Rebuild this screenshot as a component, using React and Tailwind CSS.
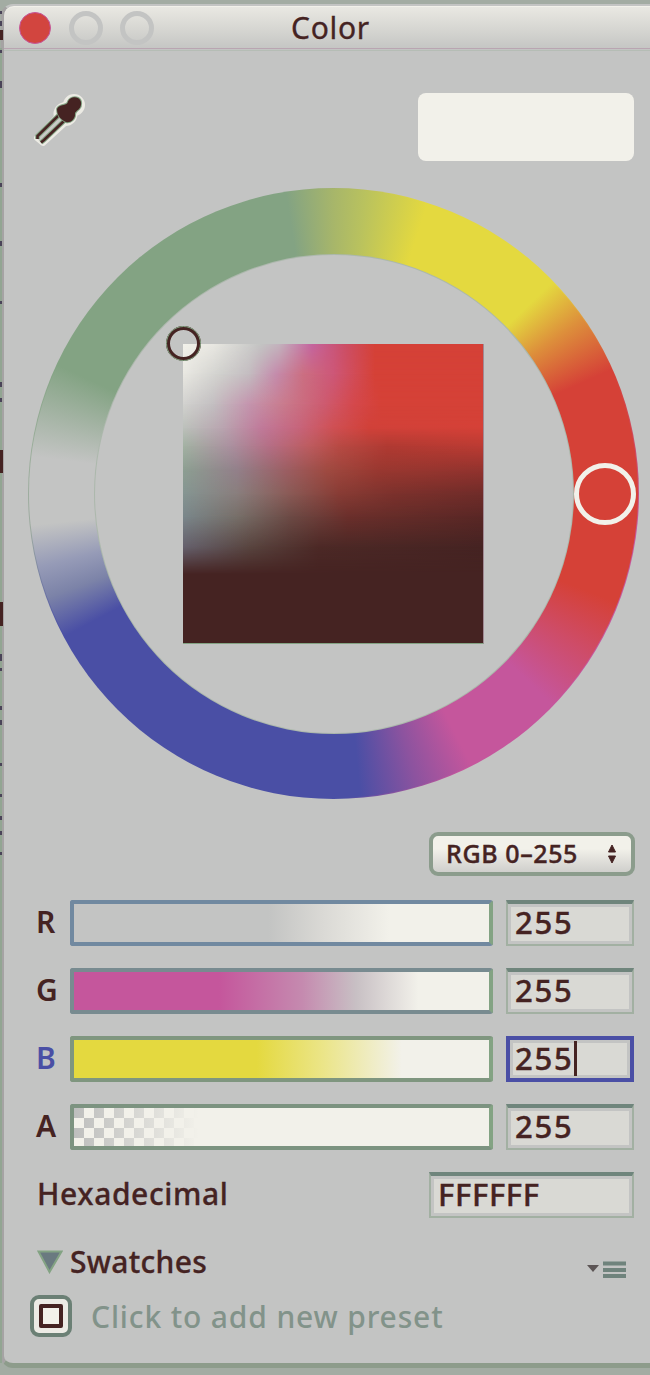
const SQUARE_ROWS = [
  [0, 'linear-gradient(90deg,#f2f1ea 0%,#e9e8e2 10%,#c3c4c3 26%,#c3b3bd 32%,#c5649f 43%,#cc4e66 54%,#d54137 64%)'],
  [10, 'linear-gradient(90deg,#e9e8e2 0%,#cfcfcc 13%,#c3bcc0 22%,#c48cac 31%,#cb6f82 40%,#cd5778 50%,#d54137 64%)'],
  [20, 'linear-gradient(90deg,#d2d2cf 0%,#c3bfc1 10%,#c495ae 22%,#c97a8c 34%,#cd5b70 47%,#d4484c 57%,#d54137 66%)'],
  [28, 'linear-gradient(90deg,#bcc1bb 0%,#b9a5b0 13%,#c07a9a 26%,#c7647a 39%,#cf5054 50%,#d14139 62%,#d54137 100%)'],
  [34, 'linear-gradient(90deg,#a3b2a3 0%,#ab909f 16%,#b56e85 29%,#bd5c60 42%,#b84a44 52%,#b13a32 68%,#bc3b33 100%)'],
  [42, 'linear-gradient(90deg,#8d9f92 0%,#93808a 18%,#9c5f64 34%,#a04a41 48%,#9a3830 65%,#93332e 100%)'],
  [50, 'linear-gradient(90deg,#859592 0%,#897e7d 18%,#8a5b57 35%,#883c35 52%,#7c312c 70%,#702c29 100%)'],
  [58, 'linear-gradient(90deg,#7a868a 0%,#766e68 18%,#6b4944 36%,#6a2f2b 55%,#592725 100%)'],
  [68, 'linear-gradient(90deg,#65606c 0%,#58443f 22%,#4c2926 45%,#452322 100%)'],
  [77, 'linear-gradient(90deg,#452322,#452322)'],
];

function rowMask(i) {
  if (i === 0) return undefined;
  return `linear-gradient(180deg, transparent ${SQUARE_ROWS[i - 1][0]}%, #000 ${SQUARE_ROWS[i][0]}%)`;
}

function SaturationSquare() {
  return (
    <div className="relative grid h-[300px] w-[301px] border-b border-r border-b-[#83a383] border-r-[#a08a94]">
      {SQUARE_ROWS.map(([y, bg], i) => (
        <div key={y} className="[grid-area:1/1]" style={{ background: bg, maskImage: rowMask(i) }} />
      ))}
      <div className="absolute -left-[17px] -top-[18px] size-[35px] rounded-full border-4 border-[#452322] outline-1 -outline-offset-1 outline-[#83a383]" />
    </div>
  );
}

function ColorWheel() {
  return (
    <div className="relative ml-[24px] mt-[28px] flex size-[611px] shrink-0 items-center justify-center rounded-full bg-[conic-gradient(#a4b36d_0deg,#e4d93f_17deg,#e4d93f_47deg,#d54137_66deg,#c5569c_98deg,#c5569c_155deg,#8b539f_168deg,#4a4fa5_178deg,#4a4fa5_243deg,#9daaa0_263deg,#9daf9d_277deg,#83a383_295deg,#83a383_351deg,#a4b36d_360deg)]">
      <div className="flex size-[609px] items-center justify-center rounded-full bg-[conic-gradient(#a7b66a_0deg,#b9c25e_6deg,#e4d93f_18deg,#e4d93f_46deg,#dd8f3b_55deg,#d54137_66deg,#d54137_111deg,#ce4c68_122deg,#c5569c_134deg,#c5569c_153deg,#8c539f_164deg,#4a4fa5_175deg,#4a4fa5_242deg,#7c83a8_250deg,#969bb7_256deg,#c3c4c3_264deg,#c3c4c3_277deg,#a3b3a3_286deg,#83a383_295deg,#83a383_351deg,#a7b66a_360deg)]">
        <div className="flex size-[480px] items-center justify-center rounded-full border border-[#a3b3a3]/70 bg-[#c3c4c3]">
          <SaturationSquare />
        </div>
      </div>
      <div className="absolute left-[546px] top-[275px] size-[62px] rounded-full border-[5px] border-[#f2f1ea] bg-[#d54137]" />
    </div>
  );
}

function Field({ value, className, focused }) {
  const border = focused
    ? 'border-4 border-[#4a4fa5]'
    : 'border-2 border-t-4 border-[#a2b0a2] border-t-[#6f857c]';
  return (
    <div className={`flex h-[46px] shrink-0 ${border} ${className}`}>
      <div className={`flex grow items-start border-[3px] border-[#c3c4c3] bg-[#d9d9d4] text-[31px] leading-none [-webkit-text-stroke:0.4px_#452322] ${focused ? 'pl-[2px]' : 'pl-[4px]'}`}>
        <span>{value}</span>
        {focused && <span className="-mt-[2px] h-[35px] w-[3px] shrink-0 bg-[#452322]" />}
      </div>
    </div>
  );
}

const CHANNELS = [
  { label: 'R', edge: 'border-[#7189a0] border-r-[#83a383]', fill: 'bg-[linear-gradient(90deg,#c3c4c3_47%,#dad9d5_60%,#f2f1ea_76%)]' },
  { label: 'G', edge: 'border-[#788b90] border-r-[#83a383]', fill: 'bg-[linear-gradient(90deg,#c5569c_35%,#c58aaf_55%,#c8c0c4_68%,#f2f1ea_83%)]' },
  { label: 'B', edge: 'border-[#7f967f] border-r-[#83a383]', fill: 'bg-[linear-gradient(90deg,#e4d93f_44%,#ebe588_60%,#f2f1ea_79%)]', focused: true },
  { label: 'A', edge: 'border-[#7c9380] border-r-[#83a383]', fill: 'bg-[linear-gradient(90deg,transparent,#f2f1ea_30%),repeating-conic-gradient(#f2f1ea_0_25%,#bdbebd_0_50%)] bg-[size:100%_100%,20px_20px]' },
];

function ChannelRow({ label, edge, fill, focused }) {
  return (
    <div className="flex h-[46px] items-center">
      <div className={`-mt-[2px] w-[34px] text-[30px] font-semibold leading-none ${focused ? 'text-[#4a4fa5]' : ''}`}>{label}</div>
      <div className={`h-[46px] w-[423px] rounded-[3px] border-4 ${edge} ${fill} bg-origin-padding bg-clip-padding`} />
      <Field value="255" focused={focused} className="ml-[13px] w-[128px] tracking-[1.8px]" />
    </div>
  );
}

const EDGE_MARKS = [
  [11, 3], [21, 5], [30, 10], [50, 3], [81, 7], [183, 4], [241, 5], [301, 3], [382, 5], [398, 4],
  [450, 23], [602, 24], [654, 7], [668, 3], [706, 4], [720, 5], [763, 3], [794, 3], [816, 4], [831, 4], [852, 3],
];

function BackdropEdge() {
  return (
    <svg width="3" height="1375" viewBox="0 0 3 1375" className="absolute left-0 top-0" aria-hidden="true">
      <rect x="0" y="48" width="2" height="1315" fill="#92a592" />
      {EDGE_MARKS.map(([y, h]) => (
        <rect key={y} x="0" y={y} width={h > 8 ? 3 : 2} height={h} fill={h > 8 ? '#452322' : '#4a4458'} />
      ))}
    </svg>
  );
}

export default function App() {
  return (
    <div className="relative h-[1375px] w-[650px] overflow-hidden bg-[#a3aca3] pt-[4px] font-['Noto_Sans','Open_Sans',sans-serif] font-medium text-[#452322]">
      <BackdropEdge />
      <div className="ml-[1px] flex h-[1364px] w-[649px] flex-col rounded-l-[12px] border-b-[5px] border-l-[3px] border-t-2 border-[#8d9c8b] border-l-[#a5a3a3] border-t-[#c3c4c3] bg-[#c3c4c3]">
        <div className="grid h-[42px] shrink-0 grid-cols-[1fr_auto_1fr] items-center rounded-tl-[10px] border-t border-[#f2f1ea] bg-[linear-gradient(180deg,#e9e8e2,#d4d4d0_60%,#c5c6c4)]">
          <div className="flex items-center gap-[18px] pl-[15px]">
            <span className="size-[32px] rounded-full border border-[#c5569c] bg-[#d2453f]" />
            <span className="size-[34px] rounded-full border-[5px] border-[#c3c4c3]" />
            <span className="-ml-px size-[34px] rounded-full border-[5px] border-[#c3c4c3]" />
          </div>
          <h1 className="ml-[7px] text-[30px] font-normal leading-none tracking-[0.7px] [-webkit-text-stroke:0.3px_#452322]">Color</h1>
          <div />
        </div>
        <div className="h-[3px] shrink-0 border-y border-[#b9a5b1] border-b-[#b5bdb5]" />

        <div className="flex h-[109px] shrink-0 items-end justify-between pl-[28px] pr-[16px]">
          <svg width="56" height="58" viewBox="0 0 56 58" className="mb-[9px]" aria-hidden="true">
            <g stroke="#ecebe4" strokeWidth="6" strokeLinejoin="round" strokeLinecap="round" fill="#ecebe4">
              <path d="M5 45 L26 23 L34 29 L11 50 Z" />
              <circle cx="33.5" cy="21" r="9" />
              <circle cx="42" cy="12" r="8" />
            </g>
            <path d="M5 45 L26 23 L33 28 L9 50 Z" fill="#c9cac7" />
            <path d="M5.5 46 V43 L27 22 M9 49.5 L12 47 L33 27" fill="none" stroke="#83a383" strokeWidth="4.6" />
            <path d="M5.5 46 V43 L27 22 M9 49.5 L12 47 L33 27" fill="none" stroke="#452322" strokeWidth="2.6" />
            <path d="M25 16 C27 11 33 13 35.5 10 C37 4 43 3.500 46 5 C50 7 50 13 47 16 C45 18 42.500 19 43 22 C43 26 38 30.500 34 29 C30 27 25 24 25 16 Z" fill="#452322" stroke="#83a383" strokeWidth="2" paintOrder="stroke" />
          </svg>
          <div className="-mb-px h-[68px] w-[216px] rounded-[8px] bg-[#f2f1ea]" />
        </div>

        <ColorWheel />

        <div className="ml-[425px] mt-[33px] flex h-[44px] w-[206px] shrink-0 items-center justify-between rounded-[9px] border-4 border-[#8b9c8c] bg-[linear-gradient(180deg,#f2f1ea_35%,#cfcfcc)] px-[13px]">
          <span className="-mt-[2px] text-[25px] leading-none tracking-[0.6px] [-webkit-text-stroke:0.4px_#452322]">RGB 0–255</span>
          <svg width="10" height="20" viewBox="0 0 10 20" className="mr-px" aria-hidden="true">
            <path d="M5 1 L8.500 8 H1.500 Z M5 19 L8.500 12 H1.500 Z" fill="#452322" stroke="#452322" />
          </svg>
        </div>

        <div className="mt-[24px] flex shrink-0 flex-col gap-[22px] pl-[32px]">
          {CHANNELS.map((c) => (
            <ChannelRow key={c.label} {...c} />
          ))}
        </div>

        <div className="mt-[22px] flex h-[46px] shrink-0 items-center justify-between pl-[33px] pr-[16px]">
          <span className="-mt-[3px] text-[30px] leading-none tracking-[0.6px] [-webkit-text-stroke:0.3px_#452322]">Hexadecimal</span>
          <Field value="FFFFFF" className="w-[205px] tracking-[0.6px]" />
        </div>

        <div className="mt-[22px] flex h-[44px] shrink-0 items-center pl-[33px] pr-[23px]">
          <svg width="26" height="24" viewBox="0 0 26 24" aria-hidden="true">
            <path d="M1.500 1.500 H24.500 L12.500 22 Z" fill="#6a7a80" stroke="#83a383" strokeWidth="2" />
          </svg>
          <span className="-mt-px ml-[7px] text-[30px] leading-none tracking-[0.3px] [-webkit-text-stroke:0.3px_#452322]">Swatches</span>
          <svg width="41" height="18" viewBox="0 0 41 18" className="ml-auto mt-[16px]" aria-hidden="true">
            <path d="M1 4 H13 L7 11 Z" fill="#5c5555" />
            <path d="M17 2.500 H40 M17 9 H40 M17 15 H40" stroke="#6f837c" strokeWidth="3.8" />
          </svg>
        </div>

        <div className="mt-[11px] flex h-[42px] shrink-0 items-center pl-[26px]">
          <div className="flex size-[42px] items-center justify-center rounded-[9px] border-4 border-[#6b8075] bg-[#ecebe5]">
            <div className="size-[24px] rounded-[2px] border-4 border-[#452322] bg-[#f2f1ea]" />
          </div>
          <span className="ml-[19px] mt-[2px] text-[30px] leading-none tracking-[0.85px] text-[#82938a]">Click to add new preset</span>
        </div>
      </div>
    </div>
  );
}
